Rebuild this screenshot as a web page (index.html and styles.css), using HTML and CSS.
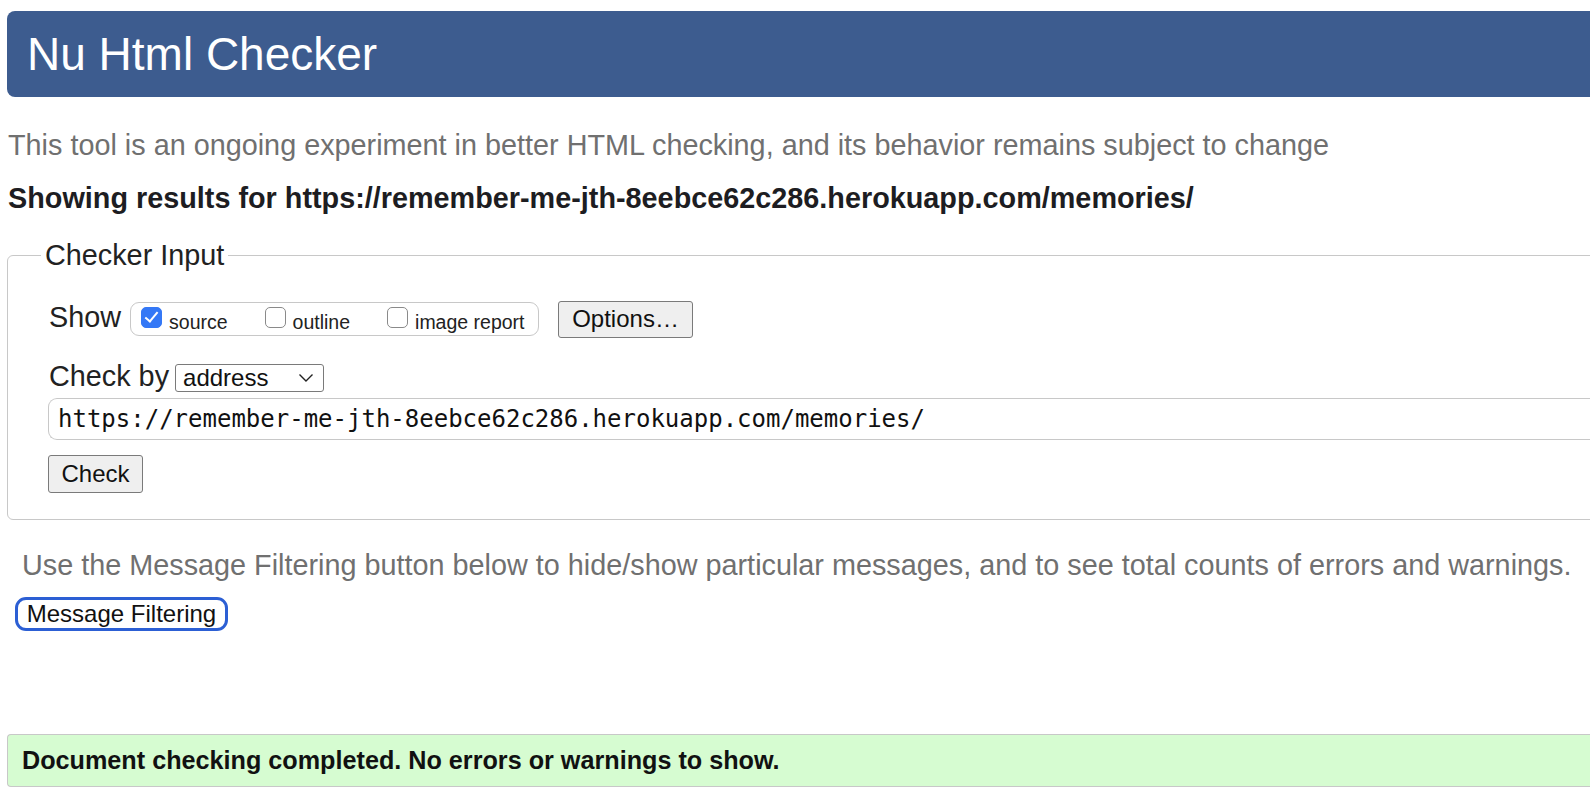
FILE: index.html
```html
<!DOCTYPE html>
<html lang="en">
<head>
<meta charset="utf-8">
<title>Nu Html Checker</title>
<link rel="stylesheet" href="styles.css">
</head>
<body>
<div class="page">
  <h1 class="masthead">Nu Html Checker</h1>
  <p class="intro">This tool is an ongoing experiment in better HTML checking, and its behavior remains subject to change</p>
  <p class="results-for">Showing results for https://remember-me-jth-8eebce62c286.herokuapp.com/memories/</p>

  <fieldset class="checker">
    <legend class="checker-legend">Checker Input</legend>
    <div class="row show-row">
      <span class="label">Show</span>
      <div class="show-group">
        <label class="opt"><input type="checkbox" class="cb" checked><span>source</span></label>
        <label class="opt"><input type="checkbox" class="cb"><span>outline</span></label>
        <label class="opt"><input type="checkbox" class="cb"><span>image report</span></label>
      </div>
      <button class="btn options-btn" type="button">Options…</button>
    </div>
    <div class="row by-row">
      <span class="label">Check by</span>
      <div class="select">
        <span>address</span>
        <svg class="chev" width="16" height="10" viewBox="0 0 16 10"><path d="M1.5 1.5 L8 8 L14.5 1.5" fill="none" stroke="#222" stroke-width="1.4"/></svg>
      </div>
    </div>
    <div class="url-input">https://remember-me-jth-8eebce62c286.herokuapp.com/memories/</div>
    <button class="btn check-btn" type="button">Check</button>
  </fieldset>

  <p class="filter-note">Use the Message Filtering button below to hide/show particular messages, and to see total counts of errors and warnings.</p>
  <button class="filter-btn" type="button">Message Filtering</button>

  <div class="success">Document checking completed. No errors or warnings to show.</div>
</div>
</body>
</html>
```

FILE: styles.css
```css
html, body {
  margin: 0;
  padding: 0;
  background: #fff;
  overflow: hidden;
}

body {
  font-family: "Liberation Sans", Arial, sans-serif;
  color: #222;
}

.page {
  width: 1640px;
  padding: 11px 0 0 7px;
}

.masthead {
  margin: 0;
  height: 86px;
  display: flex;
  align-items: center;
  padding-left: 20px;
  background: #3d5c8f;
  color: #fff;
  font-size: 46px;
  font-weight: normal;
  line-height: 1;
  border-radius: 8px;
}

.intro {
  margin: 32px 0 0 1px;
  font-size: 28.8px;
  line-height: 33px;
  color: #707070;
  white-space: nowrap;
}

.results-for {
  margin: 20px 0 0 1px;
  font-size: 28.8px;
  line-height: 33px;
  font-weight: bold;
  color: #1d1d22;
  white-space: nowrap;
}

.checker {
  margin: 22px 0 0 0;
  padding: 0 0 26px 41px;
  border: 1px solid #c8c8c8;
  border-radius: 6px;
}

.checker-legend {
  margin-left: -8px;
  padding: 2px 4px 1px;
  font-size: 28.8px;
  line-height: 33px;
  color: #222;
}

.row {
  display: flex;
  align-items: center;
}

.label {
  font-size: 28.8px;
  line-height: 33px;
  color: #222;
  margin-bottom: 4px;
  white-space: nowrap;
}

.show-row {
  margin-top: 27px;
  height: 38px;
}

.show-group {
  margin-left: 9px;
  height: 34px;
  width: 409px;
  box-sizing: border-box;
  border: 1px solid #c8c8c8;
  border-radius: 9px;
  display: flex;
  align-items: center;
  padding-left: 10px;
}

.opt {
  display: flex;
  align-items: center;
  font-size: 19.5px;
  color: #222;
  white-space: nowrap;
}

.opt + .opt {
  margin-left: 37px;
}

.opt span {
  position: relative;
  top: 3px;
  margin-left: 7px;
}

.cb {
  appearance: none;
  -webkit-appearance: none;
  margin: 0;
  width: 21px;
  height: 21px;
  box-sizing: border-box;
  border: 1.5px solid #8a8a8a;
  border-radius: 5px;
  background: #fff;
  position: relative;
  top: -2px;
}

.cb:checked {
  background: #3478f6;
  border-color: #3478f6;
}

.cb:checked::after {
  content: "";
  position: absolute;
  left: 6px;
  top: 1.5px;
  width: 5px;
  height: 11px;
  border: solid #fff;
  border-width: 0 2.5px 2.5px 0;
  transform: rotate(40deg);
}

.btn {
  font-family: "Liberation Sans", Arial, sans-serif;
  font-size: 24px;
  color: #111;
  background: #efefef;
  border: 1px solid #7a7a7a;
  border-radius: 3px;
  padding: 0;
  line-height: 1;
}

.options-btn {
  margin-left: 19px;
  width: 135px;
  height: 37px;
}

.by-row {
  margin-top: 26px;
  height: 28px;
}

.select {
  margin-left: 6px;
  width: 149px;
  height: 28px;
  box-sizing: border-box;
  border: 1px solid #7a7a7a;
  border-radius: 3px;
  display: flex;
  align-items: center;
  justify-content: space-between;
  padding: 0 9px 0 7px;
  font-size: 24px;
  color: #111;
}

.url-input {
  margin-top: 6px;
  margin-left: -1px;
  height: 42px;
  box-sizing: border-box;
  border: 1px solid #c8c8c8;
  border-right: none;
  border-radius: 9px 0 0 9px;
  padding-left: 9px;
  display: flex;
  align-items: center;
  font-family: "DejaVu Sans Mono", "Liberation Mono", monospace;
  font-size: 24px;
  color: #111;
  white-space: nowrap;
}

.check-btn {
  display: block;
  margin-top: 15px;
  margin-left: -1px;
  width: 95px;
  height: 38px;
}

.filter-note {
  margin: 29px 0 0 15px;
  font-size: 28.8px;
  line-height: 33px;
  color: #707070;
  white-space: nowrap;
}

.filter-btn {
  display: block;
  margin: 15px 0 0 8px;
  width: 213px;
  height: 34px;
  box-sizing: border-box;
  padding: 0;
  border: 3px solid #2c5fd4;
  border-radius: 11px;
  background: #fff;
  font-family: "Liberation Sans", Arial, sans-serif;
  font-size: 24px;
  color: #111;
  line-height: 1;
}

.success {
  margin-top: 103px;
  height: 53px;
  box-sizing: border-box;
  border: 1px solid #c8c8c8;
  border-right: none;
  border-radius: 4px 0 0 4px;
  background: #d6fcd1;
  padding-left: 14px;
  display: flex;
  align-items: center;
  font-size: 25.2px;
  font-weight: bold;
  color: #111;
  white-space: nowrap;
}
```
